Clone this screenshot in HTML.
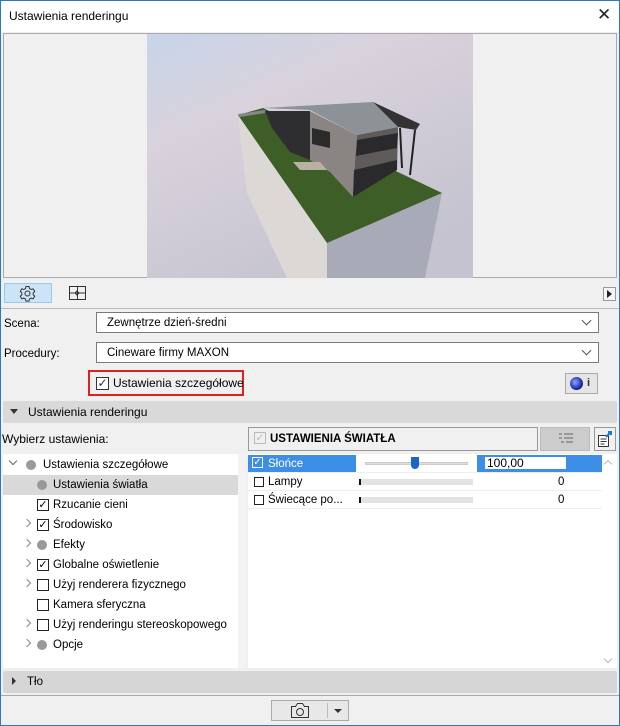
<!DOCTYPE html>
<html><head><meta charset="utf-8"><style>
*{box-sizing:border-box;margin:0;padding:0}
body{width:620px;height:726px;overflow:hidden;background:#f0f0f0;font-family:"Liberation Sans",sans-serif;font-size:11.5px;line-height:14px;color:#000;position:relative}
.a{position:absolute}
.win{left:0;top:0;width:620px;height:726px;border:1px solid #2b79c2}
.combo{background:#fff;border:1px solid #7a7a7a;height:21px;padding:3px 0 0 10px;font-size:11.5px}
.chev{position:absolute;right:8px;top:4px;width:7px;height:7px;border-right:1px solid #555;border-bottom:1px solid #555;transform:rotate(45deg)}
.tr{position:absolute;left:0;width:235px;height:20px;font-size:11.5px}
.tr span.t{position:absolute;left:50px;top:3px}
.dot{position:absolute;left:34px;top:5px;width:10px;height:10px;border-radius:50%;background:#999}
.tcb{position:absolute;left:34px;top:4px;width:12px;height:12px;border:1px solid #222;background:#fff;font-size:11px;line-height:10px;text-align:center}
.arr{position:absolute;left:21px;top:5px;width:6px;height:6px;border-right:1px solid #888;border-top:1px solid #888;transform:rotate(45deg)}
</style></head><body>
<div class="a win"></div>
<div class="a" style="left:1px;top:1px;width:618px;height:31px;background:#fff"></div>
<div class="a" style="left:9px;top:9px;font-size:12px">Ustawienia renderingu</div>
<div class="a" style="left:597px;top:5px;font-size:17px;line-height:20px;color:#222">✕</div>
<div class="a" style="left:3px;top:33px;width:614px;height:245px;background:#f0f0f0;border:1px solid #aaa"></div>
<svg class="a" style="left:147px;top:34px" width="326" height="244" viewBox="147 34 326 244">
<defs><linearGradient id="sk" x1="0" y1="0" x2="0.6" y2="1"><stop offset="0" stop-color="#c7d5ea"/><stop offset="0.35" stop-color="#d9d2dc"/><stop offset="1" stop-color="#c4c3cf"/></linearGradient></defs>
<rect x="147" y="34" width="326" height="244" fill="url(#sk)"/>
<polygon points="238,115 327,243 327,278 287,278 247,193" fill="#dcd8d6"/>
<polygon points="327,243 442,193 425,278 327,278" fill="#a9aab8"/>
<polygon points="238,115 263,108 442,193 327,243" fill="#3e5e28"/>
<polygon points="265,111 310,111 310,160 290,152 272,128" fill="#2e2e30"/>
<polygon points="310,111 357,135 353,197 330,172 310,160" fill="#8a8582"/>
<polygon points="312,128 330,132 330,148 312,144" fill="#2a2a2a"/>
<polygon points="357,135 398,127 397,170 353,197" fill="#5e5b5a"/>
<polygon points="357,140 398,133 397,148 356,156" fill="#2a2a2c"/>
<polygon points="354,170 397,160 397,170 353,197" fill="#2a2a2c"/>
<polygon points="293,162 320,162 327,170 300,170" fill="#b8b0a4"/>
<polygon points="263,108 373,102 398,127 357,135 310,110" fill="#8c9296"/>
<polygon points="238,114 265,110 265,113 240,117" fill="#888"/>
<polygon points="373,102 420,124 416,130 398,127" fill="#333"/>
<path d="M400 128l2 40M415 130l-5 45" stroke="#222" stroke-width="2" fill="none"/>
</svg>
<div class="a" style="left:4px;top:283px;width:48px;height:20px;background:#cce4f7;border:1px solid #99c9ef"></div>
<svg class="a" style="left:19px;top:285px" width="17" height="17" viewBox="0 0 17 17"><circle cx="8.5" cy="8.5" r="2.5" fill="none" stroke="#333"/><path d="M7 1.5h3l.5 2 1.7 1 2-.7 1.5 2.6-1.5 1.4v2l1.5 1.4-1.5 2.6-2-.7-1.7 1-.5 2h-3l-.5-2-1.7-1-2 .7-1.5-2.6 1.5-1.4v-2L1.3 6.4l1.5-2.6 2 .7 1.7-1z" fill="none" stroke="#333"/></svg>
<svg class="a" style="left:69px;top:286px" width="18" height="15" viewBox="0 0 18 15"><rect x="0.5" y="0.5" width="16" height="13" fill="none" stroke="#333"/><path d="M8.5 1v12M1 7h15M6 7l2-2 2 2M6 7l2 2 2-2" stroke="#333" fill="none"/></svg>
<div class="a" style="left:603px;top:287px;width:13px;height:14px;border:1px solid #999;background:#f5f5f5"></div>
<div class="a" style="left:607px;top:290px;width:0;height:0;border-left:5px solid #222;border-top:4px solid transparent;border-bottom:4px solid transparent"></div>
<div class="a" style="left:1px;top:308px;width:618px;height:1px;background:#bbb"></div>
<div class="a" style="left:4px;top:317px">Scena:</div>
<div class="a combo" style="left:96px;top:312px;width:503px">Zewnętrze dzień-średni<div class="chev"></div></div>
<div class="a" style="left:4px;top:347px">Procedury:</div>
<div class="a combo" style="left:96px;top:342px;width:503px">Cineware firmy MAXON<div class="chev"></div></div>
<div class="a" style="left:88px;top:370px;width:156px;height:26px;border:2px solid #e0201f"></div>
<div class="a" style="left:96px;top:377px;width:13px;height:13px;border:1px solid #333;background:#fff;font-size:12px;line-height:11px;text-align:center;color:#333">✓</div>
<div class="a" style="left:113px;top:376px;font-size:12px">Ustawienia szczegółowe</div>
<div class="a" style="left:565px;top:373px;width:33px;height:21px;border:1px solid #aaa;background:#e5e5e5"></div>
<div class="a" style="left:570px;top:377px;width:13px;height:13px;border-radius:50%;background:radial-gradient(circle at 40% 40%,#8fa8ff,#1d2aa8 60%,#111 90%)"></div>
<div class="a" style="left:587px;top:376px;font-size:11px;font-weight:bold;color:#333">i</div>
<div class="a" style="left:3px;top:401px;width:614px;height:22px;background:#d9d9d9;border-radius:2px"></div>
<div class="a" style="left:10px;top:409px;width:0;height:0;border-top:5px solid #333;border-left:4px solid transparent;border-right:4px solid transparent"></div>
<div class="a" style="left:28px;top:405px;font-size:12px">Ustawienia renderingu</div>
<div class="a" style="left:2px;top:432px;font-size:12px">Wybierz ustawienia:</div>
<div class="a" style="left:248px;top:427px;width:290px;height:24px;border:1px solid #999;background:#f0f0f0"></div>
<div class="a" style="left:254px;top:432px;width:12px;height:12px;border:1px solid #bbb;color:#bbb;font-size:11px;line-height:10px;text-align:center">✓</div>
<div class="a" style="left:270px;top:432px;font-weight:bold;font-size:11.5px">USTAWIENIA ŚWIATŁA</div>
<div class="a" style="left:540px;top:427px;width:50px;height:24px;background:#ccc;border:1px solid #bbb"></div>
<svg class="a" style="left:557px;top:432px" width="18" height="14"><path d="M2 2h3M7 2h9M2 6h3M7 6h9M4 10h3M9 10h7" stroke="#999" stroke-width="2"/></svg>
<div class="a" style="left:594px;top:427px;width:22px;height:24px;border:1px solid #999;background:#f0f0f0"></div>
<svg class="a" style="left:597px;top:430px" width="17" height="18"><rect x="1.5" y="5.5" width="10" height="11" fill="#fff" stroke="#333"/><path d="M3.5 9h6M3.5 11.5h6M3.5 14h4" stroke="#333"/><path d="M9 7l4-4M11 2h3v3" stroke="#1e78d8" stroke-width="2" fill="none"/></svg>
<div class="a" style="left:3px;top:454px;width:235px;height:214px;background:#fff"></div>
<div class="a" style="left:238px;top:454px;width:8px;height:214px;background:#f3f3f3"></div>
<div class="a" style="left:3px;top:455px;width:235px;height:213px">
<div class="tr" style="top:0"><div class="a" style="left:7px;top:3px;width:6px;height:6px;border-right:1px solid #666;border-bottom:1px solid #666;transform:rotate(45deg)"></div><div class="dot" style="left:23px"></div><span class="t" style="left:40px">Ustawienia szczegółowe</span></div>
<div class="tr" style="top:20px;background:#d9d9d9"><div class="dot"></div><span class="t">Ustawienia światła</span></div>
<div class="tr" style="top:40px"><div class="tcb">✓</div><span class="t">Rzucanie cieni</span></div>
<div class="tr" style="top:60px"><div class="arr"></div><div class="tcb">✓</div><span class="t">Środowisko</span></div>
<div class="tr" style="top:80px"><div class="arr"></div><div class="dot"></div><span class="t">Efekty</span></div>
<div class="tr" style="top:100px"><div class="arr"></div><div class="tcb">✓</div><span class="t">Globalne oświetlenie</span></div>
<div class="tr" style="top:120px"><div class="arr"></div><div class="tcb"></div><span class="t">Użyj renderera fizycznego</span></div>
<div class="tr" style="top:140px"><div class="tcb"></div><span class="t">Kamera sferyczna</span></div>
<div class="tr" style="top:160px"><div class="arr"></div><div class="tcb"></div><span class="t">Użyj renderingu stereoskopowego</span></div>
<div class="tr" style="top:180px"><div class="arr"></div><div class="dot"></div><span class="t">Opcje</span></div>
</div>
<div class="a" style="left:248px;top:454px;width:369px;height:214px;background:#fff"></div>
<div class="a" style="left:248px;top:455px;width:354px;height:17px;background:#3d8ee6"></div>
<div class="a" style="left:356px;top:455px;width:121px;height:17px;background:#fff"></div>
<div class="a" style="left:365px;top:462px;width:103px;height:3px;background:#ddd;border:1px solid #ccc"></div>
<div class="a" style="left:411px;top:457px;width:8px;height:12px;background:#1a66c8;border-radius:0 0 4px 4px"></div>
<div class="a" style="left:252px;top:457px;width:11px;height:11px;border:1px solid #fff;color:#fff;font-size:10px;line-height:9px;text-align:center">✓</div>
<div class="a" style="left:268px;top:457px;color:#fff">Słońce</div>
<div class="a" style="left:485px;top:457px;width:81px;height:12px;background:#fff;font-size:12px;line-height:12px;padding-left:2px">100,00</div>
<div class="a" style="left:248px;top:472px;width:354px;height:1px;background:#eee"></div>
<div class="a" style="left:248px;top:490px;width:354px;height:1px;background:#eee"></div>
<div class="a" style="left:248px;top:508px;width:354px;height:1px;background:#eee"></div>
<div class="a" style="left:254px;top:477px;width:10px;height:10px;border:1px solid #222"></div>
<div class="a" style="left:268px;top:475px">Lampy</div>
<div class="a" style="left:359px;top:479px;width:114px;height:6px;background:#e3e3e3;border-left:2px solid #111"></div>
<div class="a" style="left:558px;top:475px">0</div>
<div class="a" style="left:254px;top:495px;width:10px;height:10px;border:1px solid #222"></div>
<div class="a" style="left:268px;top:493px">Świecące po...</div>
<div class="a" style="left:359px;top:497px;width:114px;height:6px;background:#e3e3e3;border-left:2px solid #111"></div>
<div class="a" style="left:558px;top:493px">0</div>
<div class="a" style="left:605px;top:461px;width:6px;height:6px;border-left:1px solid #bbb;border-top:1px solid #bbb;transform:rotate(45deg)"></div>
<div class="a" style="left:605px;top:656px;width:6px;height:6px;border-right:1px solid #bbb;border-bottom:1px solid #bbb;transform:rotate(45deg)"></div>
<div class="a" style="left:3px;top:671px;width:614px;height:22px;background:#d6d6d6;border-radius:2px"></div>
<div class="a" style="left:12px;top:677px;width:0;height:0;border-left:4px solid #333;border-top:4px solid transparent;border-bottom:4px solid transparent"></div>
<div class="a" style="left:27px;top:675px">Tło</div>
<div class="a" style="left:1px;top:695px;width:618px;height:1px;background:#aaa"></div>
<div class="a" style="left:271px;top:700px;width:78px;height:21px;border:1px solid #aaa;background:#e8e8e8"></div>
<svg class="a" style="left:290px;top:702px" width="20" height="17"><path d="M1.5 4.5h4l2-3h5l2 3h4v11h-17z" fill="none" stroke="#333"/><circle cx="10" cy="10" r="3.5" fill="none" stroke="#333"/></svg>
<div class="a" style="left:327px;top:703px;width:1px;height:15px;background:#bbb"></div>
<div class="a" style="left:334px;top:709px;width:0;height:0;border-top:4px solid #333;border-left:4px solid transparent;border-right:4px solid transparent"></div>
</body></html>
